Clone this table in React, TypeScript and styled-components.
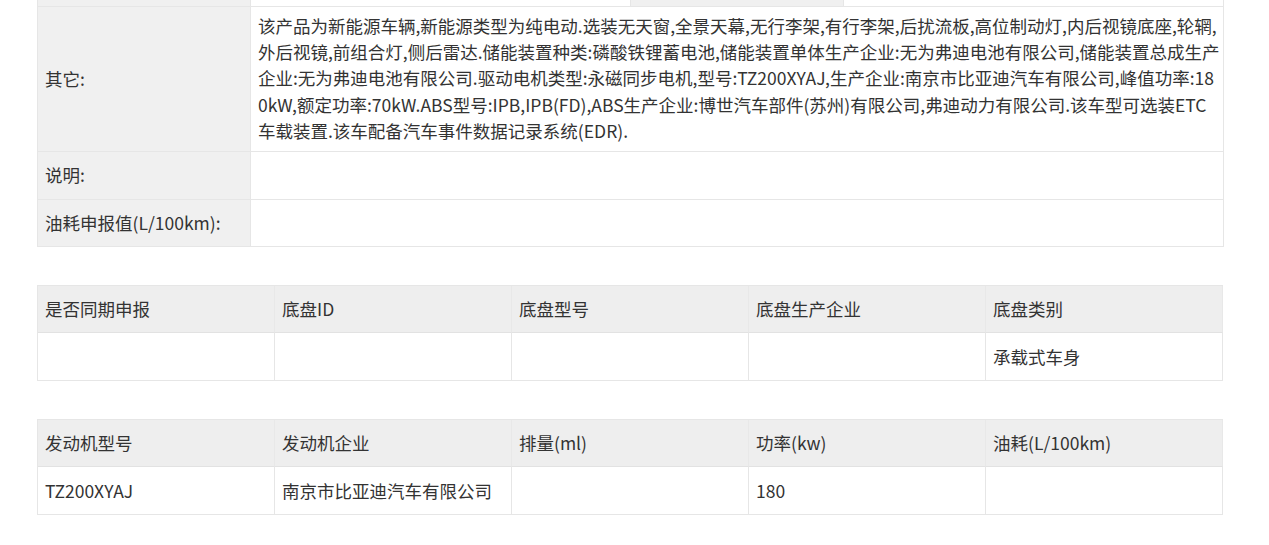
import styled, { createGlobalStyle } from "styled-components";

const GlobalStyle = createGlobalStyle`
  body {
    margin: 0;
    background: #ffffff;
    font-family: "Noto Sans CJK SC", "Liberation Sans", sans-serif;
    color: #333333;
  }
`;

const Page = styled.div`
  width: 1186px;
  padding-left: 37px;
  display: flex;
  flex-direction: column;
  gap: 38px;
`;

const InfoTable = styled.div`
  display: grid;
  grid-template-columns: 213px 380px 213px 380px;
  border-left: 1px solid #e6e6e6;
`;

const Cell = styled.div<{ $label?: boolean; $span?: number; $height?: number }>`
  box-sizing: border-box;
  grid-column: span ${(p) => p.$span || 1};
  min-height: ${(p) => (p.$height ? `${p.$height}px` : "auto")};
  background: ${(p) => (p.$label ? "#f0f0f0" : "#ffffff")};
  border-right: 1px solid #e6e6e6;
  border-bottom: 1px solid #e6e6e6;
  padding: 0 7px;
  display: flex;
  align-items: center;
  font-size: 17.5px;
  line-height: 26px;
`;

const LongText = styled.div`
  padding: 6px 0 7px;
  display: flex;
  flex-direction: column;
`;

const Line = styled.span`
  white-space: nowrap;
  height: 26.2px;
`;

const GridTable = styled.div`
  display: grid;
  grid-template-columns: repeat(5, 1fr);
  border-left: 1px solid #e6e6e6;
  border-top: 1px solid #e6e6e6;
`;

const HeadCell = styled.div`
  box-sizing: border-box;
  height: 47px;
  background: #eeeeee;
  border-right: 1px solid #e8e8e8;
  border-bottom: 1px solid #e2e2e2;
  padding: 0 7px;
  display: flex;
  align-items: center;
  font-size: 17.5px;
`;

const DataCell = styled.div`
  box-sizing: border-box;
  height: 48px;
  background: #ffffff;
  border-right: 1px solid #e6e6e6;
  border-bottom: 1px solid #e6e6e6;
  padding: 0 7px;
  display: flex;
  align-items: center;
  font-size: 17.5px;
`;

// line breaks as they fall in the original cell
const otherLines = [
	"该产品为新能源车辆,新能源类型为纯电动.选装无天窗,全景天幕,无行李架,有行李架,后扰流板,高位制动灯,内后视镜底座,轮辋,",
	"外后视镜,前组合灯,侧后雷达.储能装置种类:磷酸铁锂蓄电池,储能装置单体生产企业:无为弗迪电池有限公司,储能装置总成生产",
	"企业:无为弗迪电池有限公司.驱动电机类型:永磁同步电机,型号:TZ200XYAJ,生产企业:南京市比亚迪汽车有限公司,峰值功率:18",
	"0kW,额定功率:70kW.ABS型号:IPB,IPB(FD),ABS生产企业:博世汽车部件(苏州)有限公司,弗迪动力有限公司.该车型可选装ETC",
	"车载装置.该车配备汽车事件数据记录系统(EDR).",
];

const chassisHead = ["是否同期申报", "底盘ID", "底盘型号", "底盘生产企业", "底盘类别"];
const chassisRow = ["", "", "", "", "承载式车身"];

const engineHead = ["发动机型号", "发动机企业", "排量(ml)", "功率(kw)", "油耗(L/100km)"];
const engineRow = ["TZ200XYAJ", "南京市比亚迪汽车有限公司", "", "180", ""];

export default function App() {
	return (
		<>
			<GlobalStyle />
			<Page>
				<InfoTable>
					<Cell $label $height={7} />
					<Cell $height={7} />
					<Cell $label $height={7} />
					<Cell $height={7} />

					<Cell $label>其它:</Cell>
					<Cell $span={3}>
						<LongText>
							{otherLines.map((l) => (
								<Line key={l}>{l}</Line>
							))}
						</LongText>
					</Cell>

					<Cell $label $height={48}>说明:</Cell>
					<Cell $span={3} $height={48} />

					<Cell $label $height={47}>油耗申报值(L/100km):</Cell>
					<Cell $span={3} $height={47} />
				</InfoTable>

				<GridTable>
					{chassisHead.map((h) => (
						<HeadCell key={h}>{h}</HeadCell>
					))}
					{chassisRow.map((v, i) => (
						<DataCell key={i}>{v}</DataCell>
					))}
				</GridTable>

				<GridTable>
					{engineHead.map((h) => (
						<HeadCell key={h}>{h}</HeadCell>
					))}
					{engineRow.map((v, i) => (
						<DataCell key={i}>{v}</DataCell>
					))}
				</GridTable>
			</Page>
		</>
	);
}
